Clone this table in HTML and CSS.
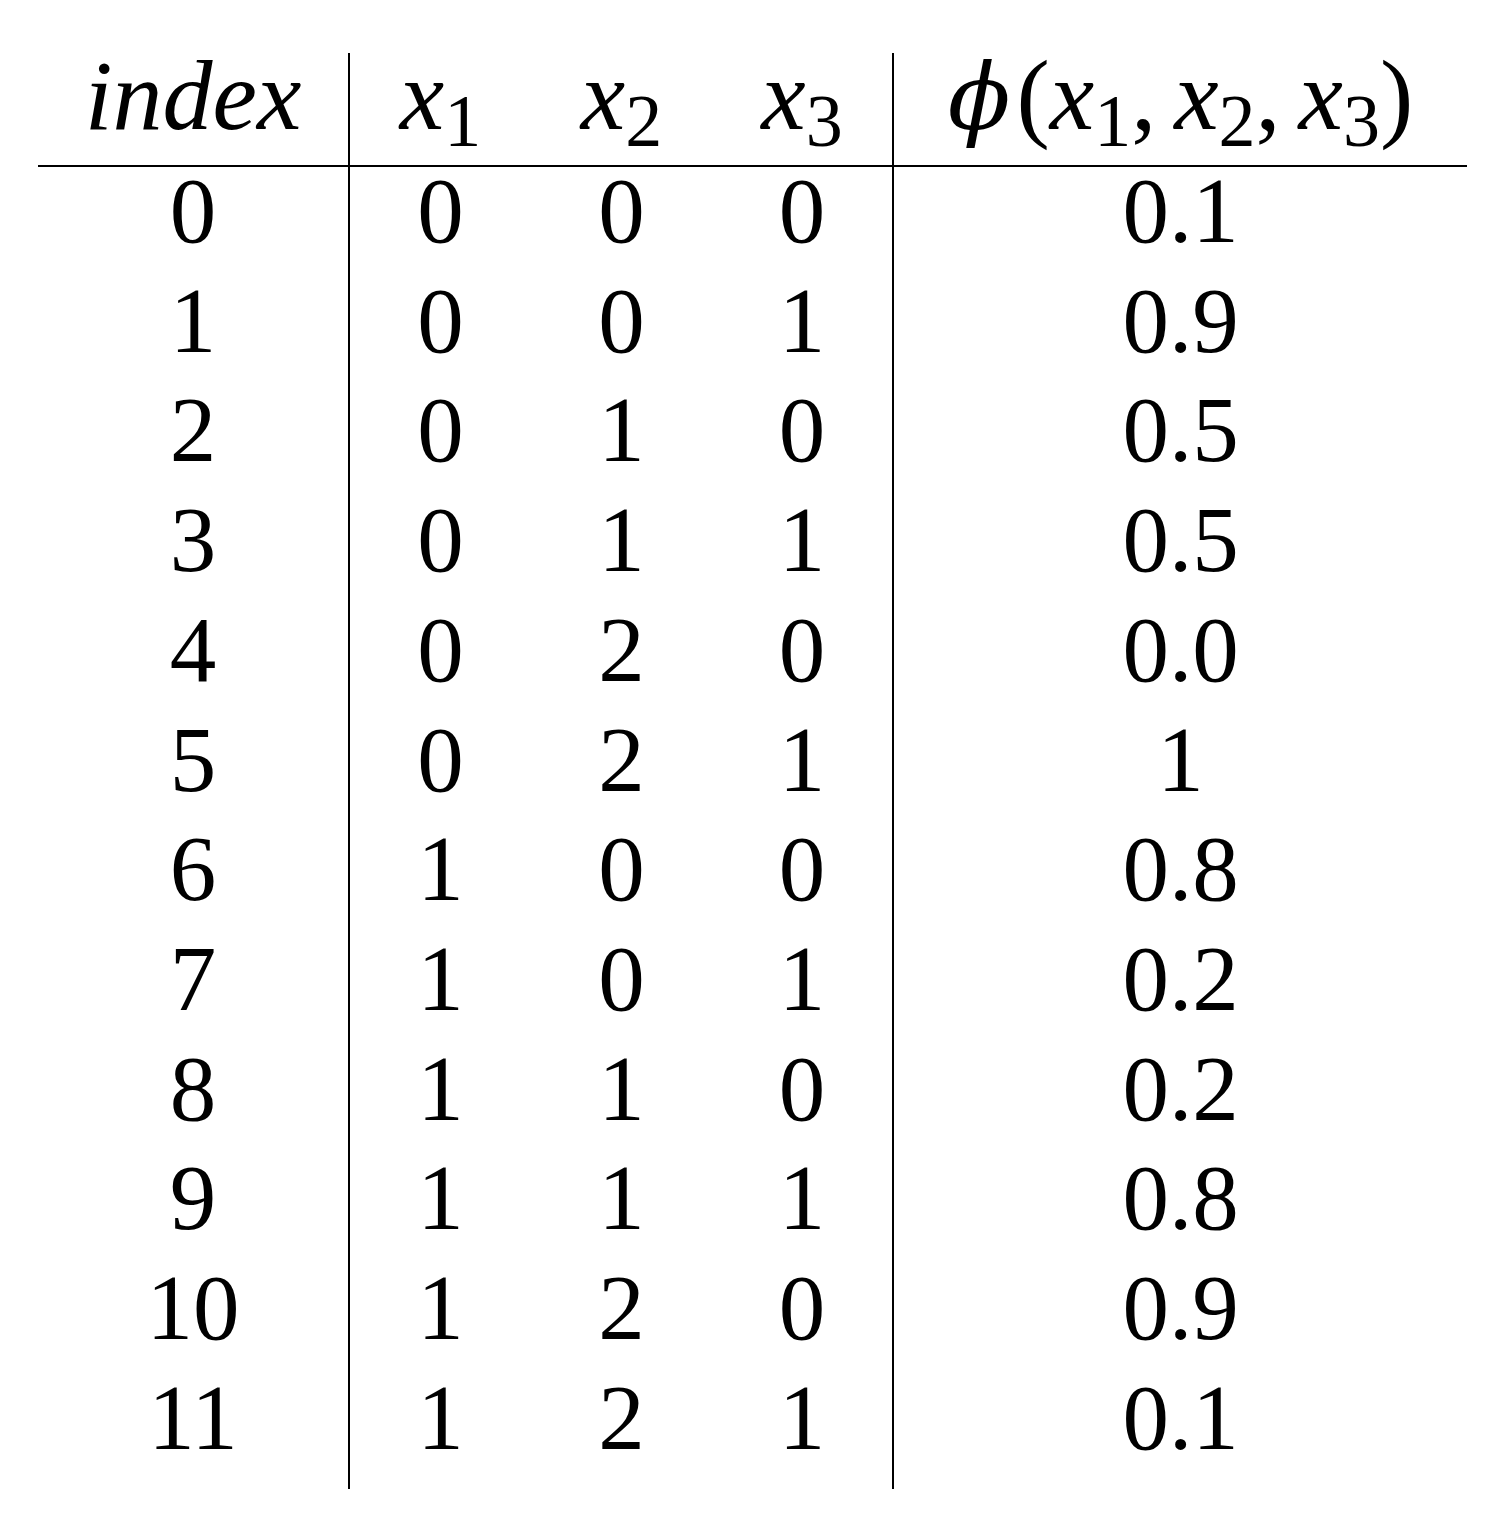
FILE: index.html
```html
<!DOCTYPE html>
<html>
<head>
<meta charset="utf-8">
<link rel="stylesheet" href="styles.css">
</head>
<body>
<div class="tbl">
  <div class="h c1"><span class="m">index</span></div>
  <div class="h"><span class="m">x<sub>1</sub></span></div>
  <div class="h"><span class="m">x<sub>2</sub></span></div>
  <div class="h c4"><span class="m">x<sub>3</sub></span></div>
  <div class="h"><span class="m"><span class="phi">ϕ</span><span class="up">(</span>x<sub>1</sub><span class="up cm">,</span>x<sub>2</sub><span class="up cm">,</span>x<sub>3</sub><span class="up">)</span></span></div>

  <div class="d c1">0</div><div class="d">0</div><div class="d">0</div><div class="d c4">0</div><div class="d">0.1</div>
  <div class="d c1">1</div><div class="d">0</div><div class="d">0</div><div class="d c4">1</div><div class="d">0.9</div>
  <div class="d c1">2</div><div class="d">0</div><div class="d">1</div><div class="d c4">0</div><div class="d">0.5</div>
  <div class="d c1">3</div><div class="d">0</div><div class="d">1</div><div class="d c4">1</div><div class="d">0.5</div>
  <div class="d c1">4</div><div class="d">0</div><div class="d">2</div><div class="d c4">0</div><div class="d">0.0</div>
  <div class="d c1">5</div><div class="d">0</div><div class="d">2</div><div class="d c4">1</div><div class="d">1</div>
  <div class="d c1">6</div><div class="d">1</div><div class="d">0</div><div class="d c4">0</div><div class="d">0.8</div>
  <div class="d c1">7</div><div class="d">1</div><div class="d">0</div><div class="d c4">1</div><div class="d">0.2</div>
  <div class="d c1">8</div><div class="d">1</div><div class="d">1</div><div class="d c4">0</div><div class="d">0.2</div>
  <div class="d c1">9</div><div class="d">1</div><div class="d">1</div><div class="d c4">1</div><div class="d">0.8</div>
  <div class="d c1">10</div><div class="d">1</div><div class="d">2</div><div class="d c4">0</div><div class="d">0.9</div>
  <div class="d c1 last">11</div><div class="d last">1</div><div class="d last">2</div><div class="d c4 last">1</div><div class="d last">0.1</div>
</div>
</body>
</html>
```

FILE: styles.css
```css
html, body {
  margin: 0;
  padding: 0;
  background: #fff;
}

.tbl {
  display: grid;
  grid-template-columns: 312px 181px 181px 182px 573px;
  width: 1429px;
  margin: 53px 0 0 38px;
  color: #000;
  font-family: "Liberation Serif", "DejaVu Serif", serif;
}

.h {
  font-size: 100px;
  font-style: italic;
  line-height: 86.5px;
  padding-bottom: 23.5px;
  border-bottom: 2px solid #000;
  text-align: center;
  white-space: nowrap;
}

.h sub {
  font-style: normal;
  font-size: 74px;
  line-height: 0;
  vertical-align: -17px;
}

.h .up {
  font-style: normal;
}

.h .cm {
  font-style: normal;
  margin-right: 18px;
}

.h .phi {
  font-family: "DejaVu Serif", serif;
  font-style: italic;
  font-size: 92px;
  margin-right: 6px;
}

.d {
  font-size: 93px;
  line-height: 87.2px;
  padding-bottom: 22.5px;
  text-align: center;
}

.d.last {
  padding-bottom: 28px;
}

.c1, .c4 {
  border-right: 2px solid #000;
}
```
